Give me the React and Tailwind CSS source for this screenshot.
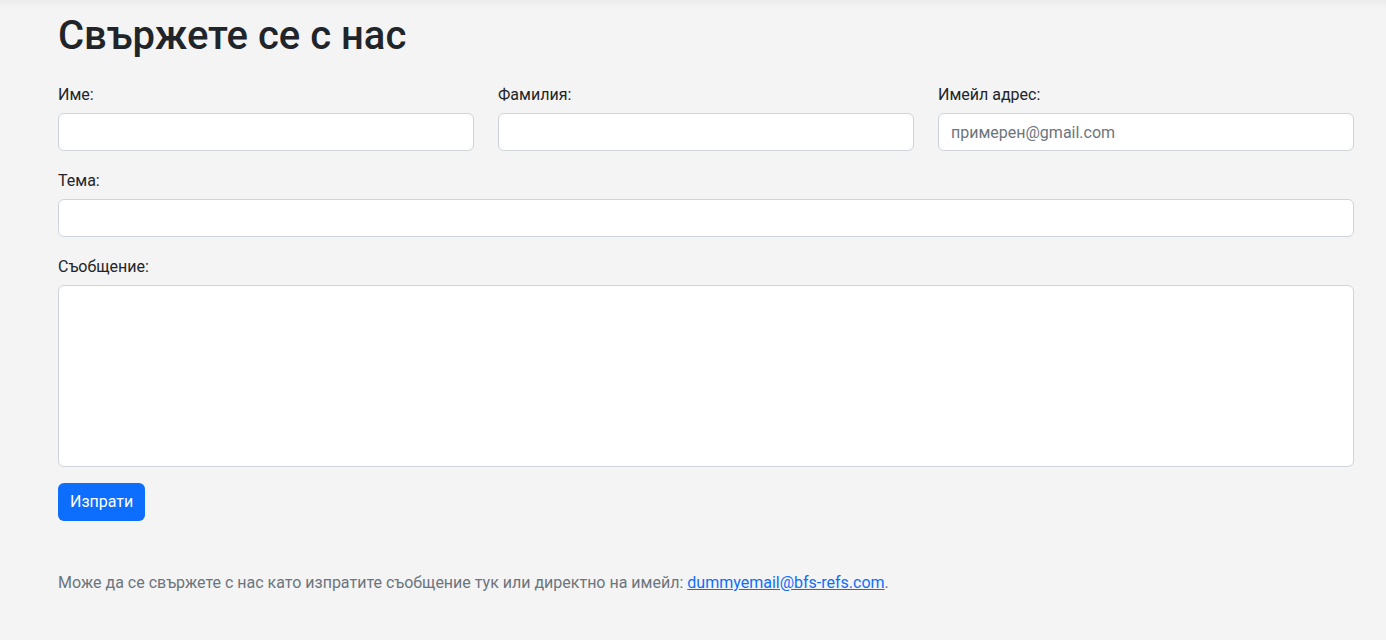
export default function App() {
  const font = { fontFamily: 'Roboto, "Noto Sans", sans-serif' };

  return (
    <div className="min-h-screen bg-[#f4f4f4] text-[#212529]" style={font}>
      <div className="h-[8px] bg-gradient-to-b from-[#ebebeb] to-[#f4f4f4]" />
      <div className="pl-[58px] pr-[32px] pt-[4px]">
        <h1 className="text-[40px] font-medium leading-[48px] mb-[21px]">Свържете се с нас</h1>

        <form onSubmit={(e) => e.preventDefault()}>
          <div className="grid grid-cols-3 gap-x-6 mb-4">
            <div>
              <label className="block text-base leading-6 pt-[2px] mb-[6px]">Име:</label>
              <input type="text" className="block w-full h-[38px] px-3 bg-white border border-[#ced4da] rounded-md text-base outline-none" />
            </div>
            <div>
              <label className="block text-base leading-6 pt-[2px] mb-[6px]">Фамилия:</label>
              <input type="text" className="block w-full h-[38px] px-3 bg-white border border-[#ced4da] rounded-md text-base outline-none" />
            </div>
            <div>
              <label className="block text-base leading-6 pt-[2px] mb-[6px]">Имейл адрес:</label>
              <input
                type="email"
                placeholder="примерен@gmail.com"
                className="block w-full h-[38px] px-3 bg-white border border-[#ced4da] rounded-md text-base outline-none placeholder:text-[#6c757d]"
              />
            </div>
          </div>

          <div className="mb-4">
            <label className="block text-base leading-6 pt-[2px] mb-[6px]">Тема:</label>
            <input type="text" className="block w-full h-[38px] px-3 bg-white border border-[#ced4da] rounded-md text-base outline-none" />
          </div>

          <div className="mb-4">
            <label className="block text-base leading-6 pt-[2px] mb-[6px]">Съобщение:</label>
            <textarea className="block w-full h-[182px] px-3 py-1.5 bg-white border border-[#ced4da] rounded-md text-base outline-none resize-none" />
          </div>

          <button type="submit" className="h-[38px] px-3 bg-[#0d6efd] text-white text-base rounded-md">
            Изпрати
          </button>
        </form>

        <p className="mt-12 pt-[2px] text-base leading-6 text-[#6c757d]">
          Може да се свържете с нас като изпратите съобщение тук или директно на имейл:{' '}
          <a href="#" className="text-[#0d6efd] underline">dummyemail@bfs-refs.com</a>.
        </p>
      </div>
    </div>
  );
}
